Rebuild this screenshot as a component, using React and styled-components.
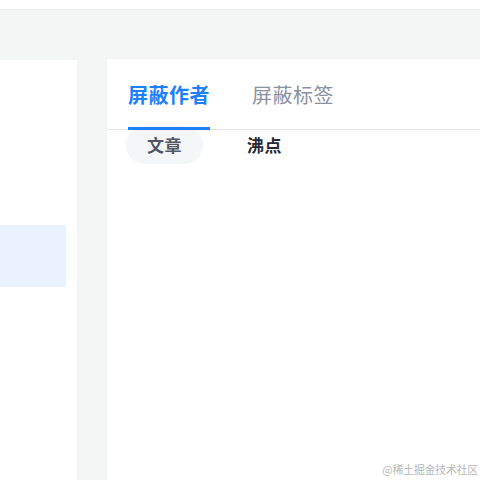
import React from "react";
import styled, { createGlobalStyle } from "styled-components";

const Global = createGlobalStyle`
  html, body { margin: 0; padding: 0; background: #f4f5f5; }
  body { font-family: "Noto Sans CJK SC", "Noto Sans", sans-serif; overflow: hidden; }
`;

const Page = styled.div`
  width: 480px;
  height: 480px;
  display: flex;
  flex-direction: column;
  background: #f4f5f5;
  position: relative;
  overflow: hidden;
`;

const TopBar = styled.div`
  height: 9px;
  background: #ffffff;
  border-bottom: 1px solid #e9eaea;
  flex-shrink: 0;
`;

const Main = styled.div`
  flex: 1;
  display: flex;
  gap: 30px;
  padding-top: 49px;
  align-items: stretch;
`;

const SideNav = styled.div`
  width: 77px;
  margin-top: 1px;
  background: #ffffff;
  display: flex;
  flex-direction: column;
  padding-top: 165px;
`;

const NavItem = styled.div`
  width: 66px;
  height: 62px;
  background: ${(p) => (p.$active ? "#eaf2ff" : "transparent")};
`;

const Panel = styled.div`
  flex: 1;
  background: #ffffff;
  display: flex;
  flex-direction: column;
`;

const TabHeader = styled.div`
  height: 71px;
  display: flex;
  align-items: stretch;
  gap: 42px;
  padding-left: 21px;
  border-bottom: 1px solid #e4e6eb;
  box-sizing: border-box;
  position: relative;
  z-index: 1;
`;

const Tab = styled.div`
  display: flex;
  align-items: center;
  font-size: 20px;
  line-height: 1;
  font-weight: ${(p) => (p.$active ? 600 : 400)};
  color: ${(p) => (p.$active ? "#1e80ff" : "#8a919f")};
  border-bottom: 3px solid ${(p) => (p.$active ? "#1e80ff" : "transparent")};
  margin-bottom: -1px;
  padding-top: 3px;
  letter-spacing: 0.5px;
`;

const SubTabs = styled.div`
  display: flex;
  gap: 23px;
  padding-left: 19px;
`;

const Pill = styled.div`
  width: 77px;
  height: 38px;
  border-radius: 19px;
  margin-top: -4px;
  display: flex;
  align-items: center;
  justify-content: center;
  font-size: 17px;
  line-height: 1;
  font-weight: 600;
  color: ${(p) => (p.$active ? "#515767" : "#252933")};
  background: ${(p) => (p.$active ? "#f5f6f7" : "transparent")};
  padding-bottom: 2px;
  box-sizing: border-box;
  letter-spacing: 0.5px;
`;

const Watermark = styled.div`
  position: absolute;
  right: 2px;
  bottom: 3px;
  font-size: 11px;
  color: #b8b8b8;
  font-family: "Noto Sans CJK SC", sans-serif;
  letter-spacing: -0.3px;
`;

export default function App() {
  return (
    <Page>
      <Global />
      <TopBar />
      <Main>
        <SideNav>
          <NavItem $active />
        </SideNav>
        <Panel>
          <TabHeader>
            <Tab $active>屏蔽作者</Tab>
            <Tab>屏蔽标签</Tab>
          </TabHeader>
          <SubTabs>
            <Pill $active>文章</Pill>
            <Pill>沸点</Pill>
          </SubTabs>
        </Panel>
      </Main>
      <Watermark>@稀土掘金技术社区</Watermark>
    </Page>
  );
}
